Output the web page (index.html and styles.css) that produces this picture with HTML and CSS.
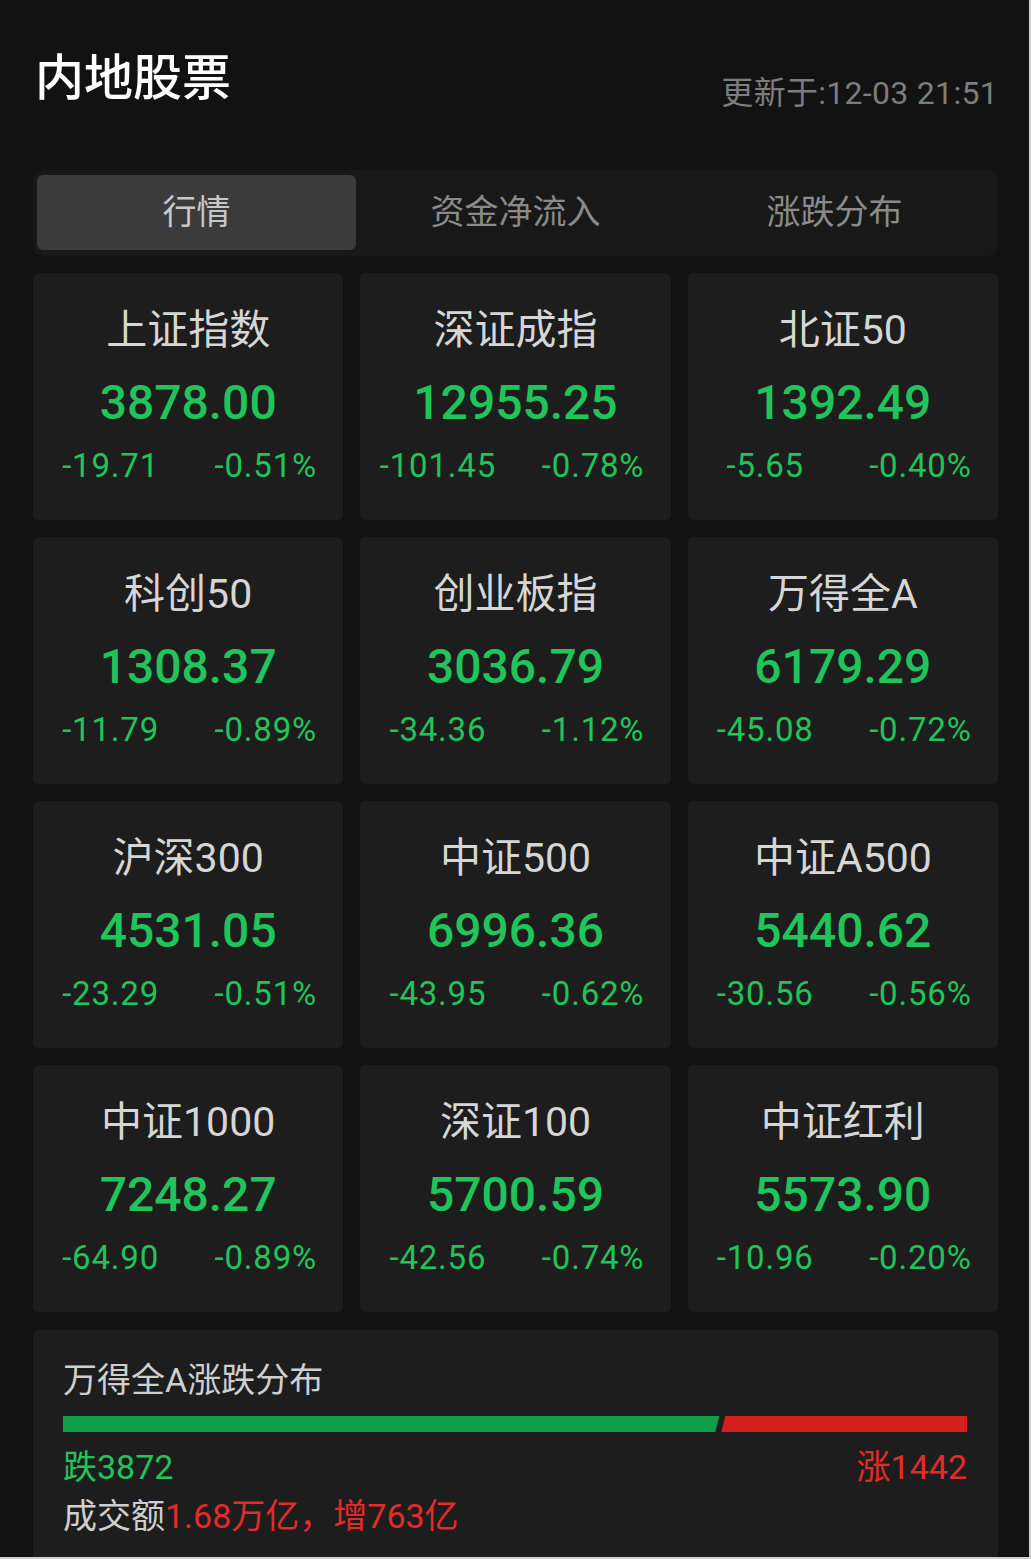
FILE: index.html
```html
<!DOCTYPE html>
<html lang="zh-CN">

<head>
    <meta charset="UTF-8">
    <meta name="viewport" content="width=device-width, initial-scale=1.0">
    <title>内地股票</title>
    <link rel="stylesheet" href="styles.css">
</head>

<body>
    <div class="page">
        <header class="header">
            <h1 class="title">内地股票</h1>
            <span class="update-time">更新于:12-03 21:51</span>
        </header>

        <nav class="tabs">
            <div class="tab active">行情</div>
            <div class="tab">资金净流入</div>
            <div class="tab">涨跌分布</div>
        </nav>

        <section class="index-grid">
            <div class="index-card">
                <div class="index-name">上证指数</div>
                <div class="index-value">3878.00</div>
                <div class="index-change"><span>-19.71</span><span>-0.51%</span></div>
            </div>
            <div class="index-card">
                <div class="index-name">深证成指</div>
                <div class="index-value">12955.25</div>
                <div class="index-change"><span>-101.45</span><span>-0.78%</span></div>
            </div>
            <div class="index-card">
                <div class="index-name">北证50</div>
                <div class="index-value">1392.49</div>
                <div class="index-change"><span>-5.65</span><span>-0.40%</span></div>
            </div>
            <div class="index-card">
                <div class="index-name">科创50</div>
                <div class="index-value">1308.37</div>
                <div class="index-change"><span>-11.79</span><span>-0.89%</span></div>
            </div>
            <div class="index-card">
                <div class="index-name">创业板指</div>
                <div class="index-value">3036.79</div>
                <div class="index-change"><span>-34.36</span><span>-1.12%</span></div>
            </div>
            <div class="index-card">
                <div class="index-name">万得全A</div>
                <div class="index-value">6179.29</div>
                <div class="index-change"><span>-45.08</span><span>-0.72%</span></div>
            </div>
            <div class="index-card">
                <div class="index-name">沪深300</div>
                <div class="index-value">4531.05</div>
                <div class="index-change"><span>-23.29</span><span>-0.51%</span></div>
            </div>
            <div class="index-card">
                <div class="index-name">中证500</div>
                <div class="index-value">6996.36</div>
                <div class="index-change"><span>-43.95</span><span>-0.62%</span></div>
            </div>
            <div class="index-card">
                <div class="index-name">中证A500</div>
                <div class="index-value">5440.62</div>
                <div class="index-change"><span>-30.56</span><span>-0.56%</span></div>
            </div>
            <div class="index-card">
                <div class="index-name">中证1000</div>
                <div class="index-value">7248.27</div>
                <div class="index-change"><span>-64.90</span><span>-0.89%</span></div>
            </div>
            <div class="index-card">
                <div class="index-name">深证100</div>
                <div class="index-value">5700.59</div>
                <div class="index-change"><span>-42.56</span><span>-0.74%</span></div>
            </div>
            <div class="index-card">
                <div class="index-name">中证红利</div>
                <div class="index-value">5573.90</div>
                <div class="index-change"><span>-10.96</span><span>-0.20%</span></div>
            </div>
        </section>

        <section class="dist-card">
            <div class="dist-title">万得全A涨跌分布</div>
            <div class="dist-bar">
                <div class="bar-down" style="width: 72.6%"></div>
                <div class="bar-up"></div>
            </div>
            <div class="dist-counts">
                <span class="down">跌3872</span>
                <span class="up">涨1442</span>
            </div>
            <div class="turnover">成交额<span class="up">1.68万亿，增763亿</span></div>
        </section>
    </div>
</body>

</html>
```

FILE: styles.css
```css
/* General Reset */
* {
    margin: 0;
    padding: 0;
    box-sizing: border-box;
}

body {
    font-family: Roboto, 'Noto Sans CJK SC', sans-serif;
    background-color: #121212;
    color: #d6d6d6;
    overflow: hidden;
}

/* thin light edge seen on the right and bottom of the screen */
body::after {
    content: "";
    position: fixed;
    inset: 0;
    box-shadow: inset -2px -2px 0 #cfcfcf;
    pointer-events: none;
}

.page {
    padding: 0 33px;
}

/* Header */
.header {
    display: flex;
    justify-content: space-between;
    align-items: flex-start;
    height: 170px;
}

.title {
    padding: 50px 0 0 2px;
    font-size: 49px;
    line-height: 58px;
    font-weight: 500;
    color: #fff;
}

.update-time {
    padding-top: 75px;
    font-size: 32px;
    line-height: 36px;
    letter-spacing: 0.3px;
    color: #7d7d7d;
}

/* Tabs */
.tabs {
    display: flex;
    background-color: #181818;
    border-radius: 10px;
    padding: 5px 4px 6px;
}

.tab {
    flex: 1;
    height: 75px;
    line-height: 75px;
    text-align: center;
    font-size: 34px;
    color: #8a8a8a;
    border-radius: 6px;
}

.tab.active {
    background-color: #3b3b3b;
    color: #c8c8c8;
}

/* Index cards */
.index-grid {
    display: grid;
    grid-template-columns: repeat(3, 1fr);
    grid-auto-rows: 247px;
    gap: 17px;
    margin-top: 17px;
}

.index-card {
    background-color: #1d1d1d;
    border-radius: 6px;
    padding-top: 32px;
    text-align: center;
}

.index-name {
    font-size: 41px;
    line-height: 50px;
    color: #d6d6d6;
}

.index-value {
    margin-top: 20px;
    font-size: 48px;
    line-height: 56px;
    font-weight: 500;
    color: #21c45a;
}

.index-change {
    display: flex;
    margin-top: 15px;
    font-size: 33px;
    line-height: 40px;
    letter-spacing: 0.8px;
    color: #21c45a;
}

.index-change span {
    flex: 1;
}

/* Distribution card */
.dist-card {
    background-color: #1d1d1d;
    border-radius: 6px;
    margin-top: 18px;
    padding: 30px 31px 40px 30px;
    font-size: 34px;
    line-height: 40px;
}

.dist-title {
    color: #cfcfcf;
}

.dist-bar {
    display: flex;
    gap: 2px;
    height: 16px;
    margin-top: 16px;
}

.bar-down {
    background-color: #0f9e48;
    clip-path: polygon(0 0, 100% 0, calc(100% - 4px) 100%, 0 100%);
}

.bar-up {
    flex: 1;
    background-color: #d41f1f;
    clip-path: polygon(4px 0, 100% 0, 100% 100%, 0 100%);
}

.dist-counts {
    display: flex;
    justify-content: space-between;
    margin-top: 15px;
}

.turnover {
    margin-top: 9px;
    color: #cfcfcf;
}

.down {
    color: #21c45a;
}

.up {
    color: #e42b2b;
}
```
